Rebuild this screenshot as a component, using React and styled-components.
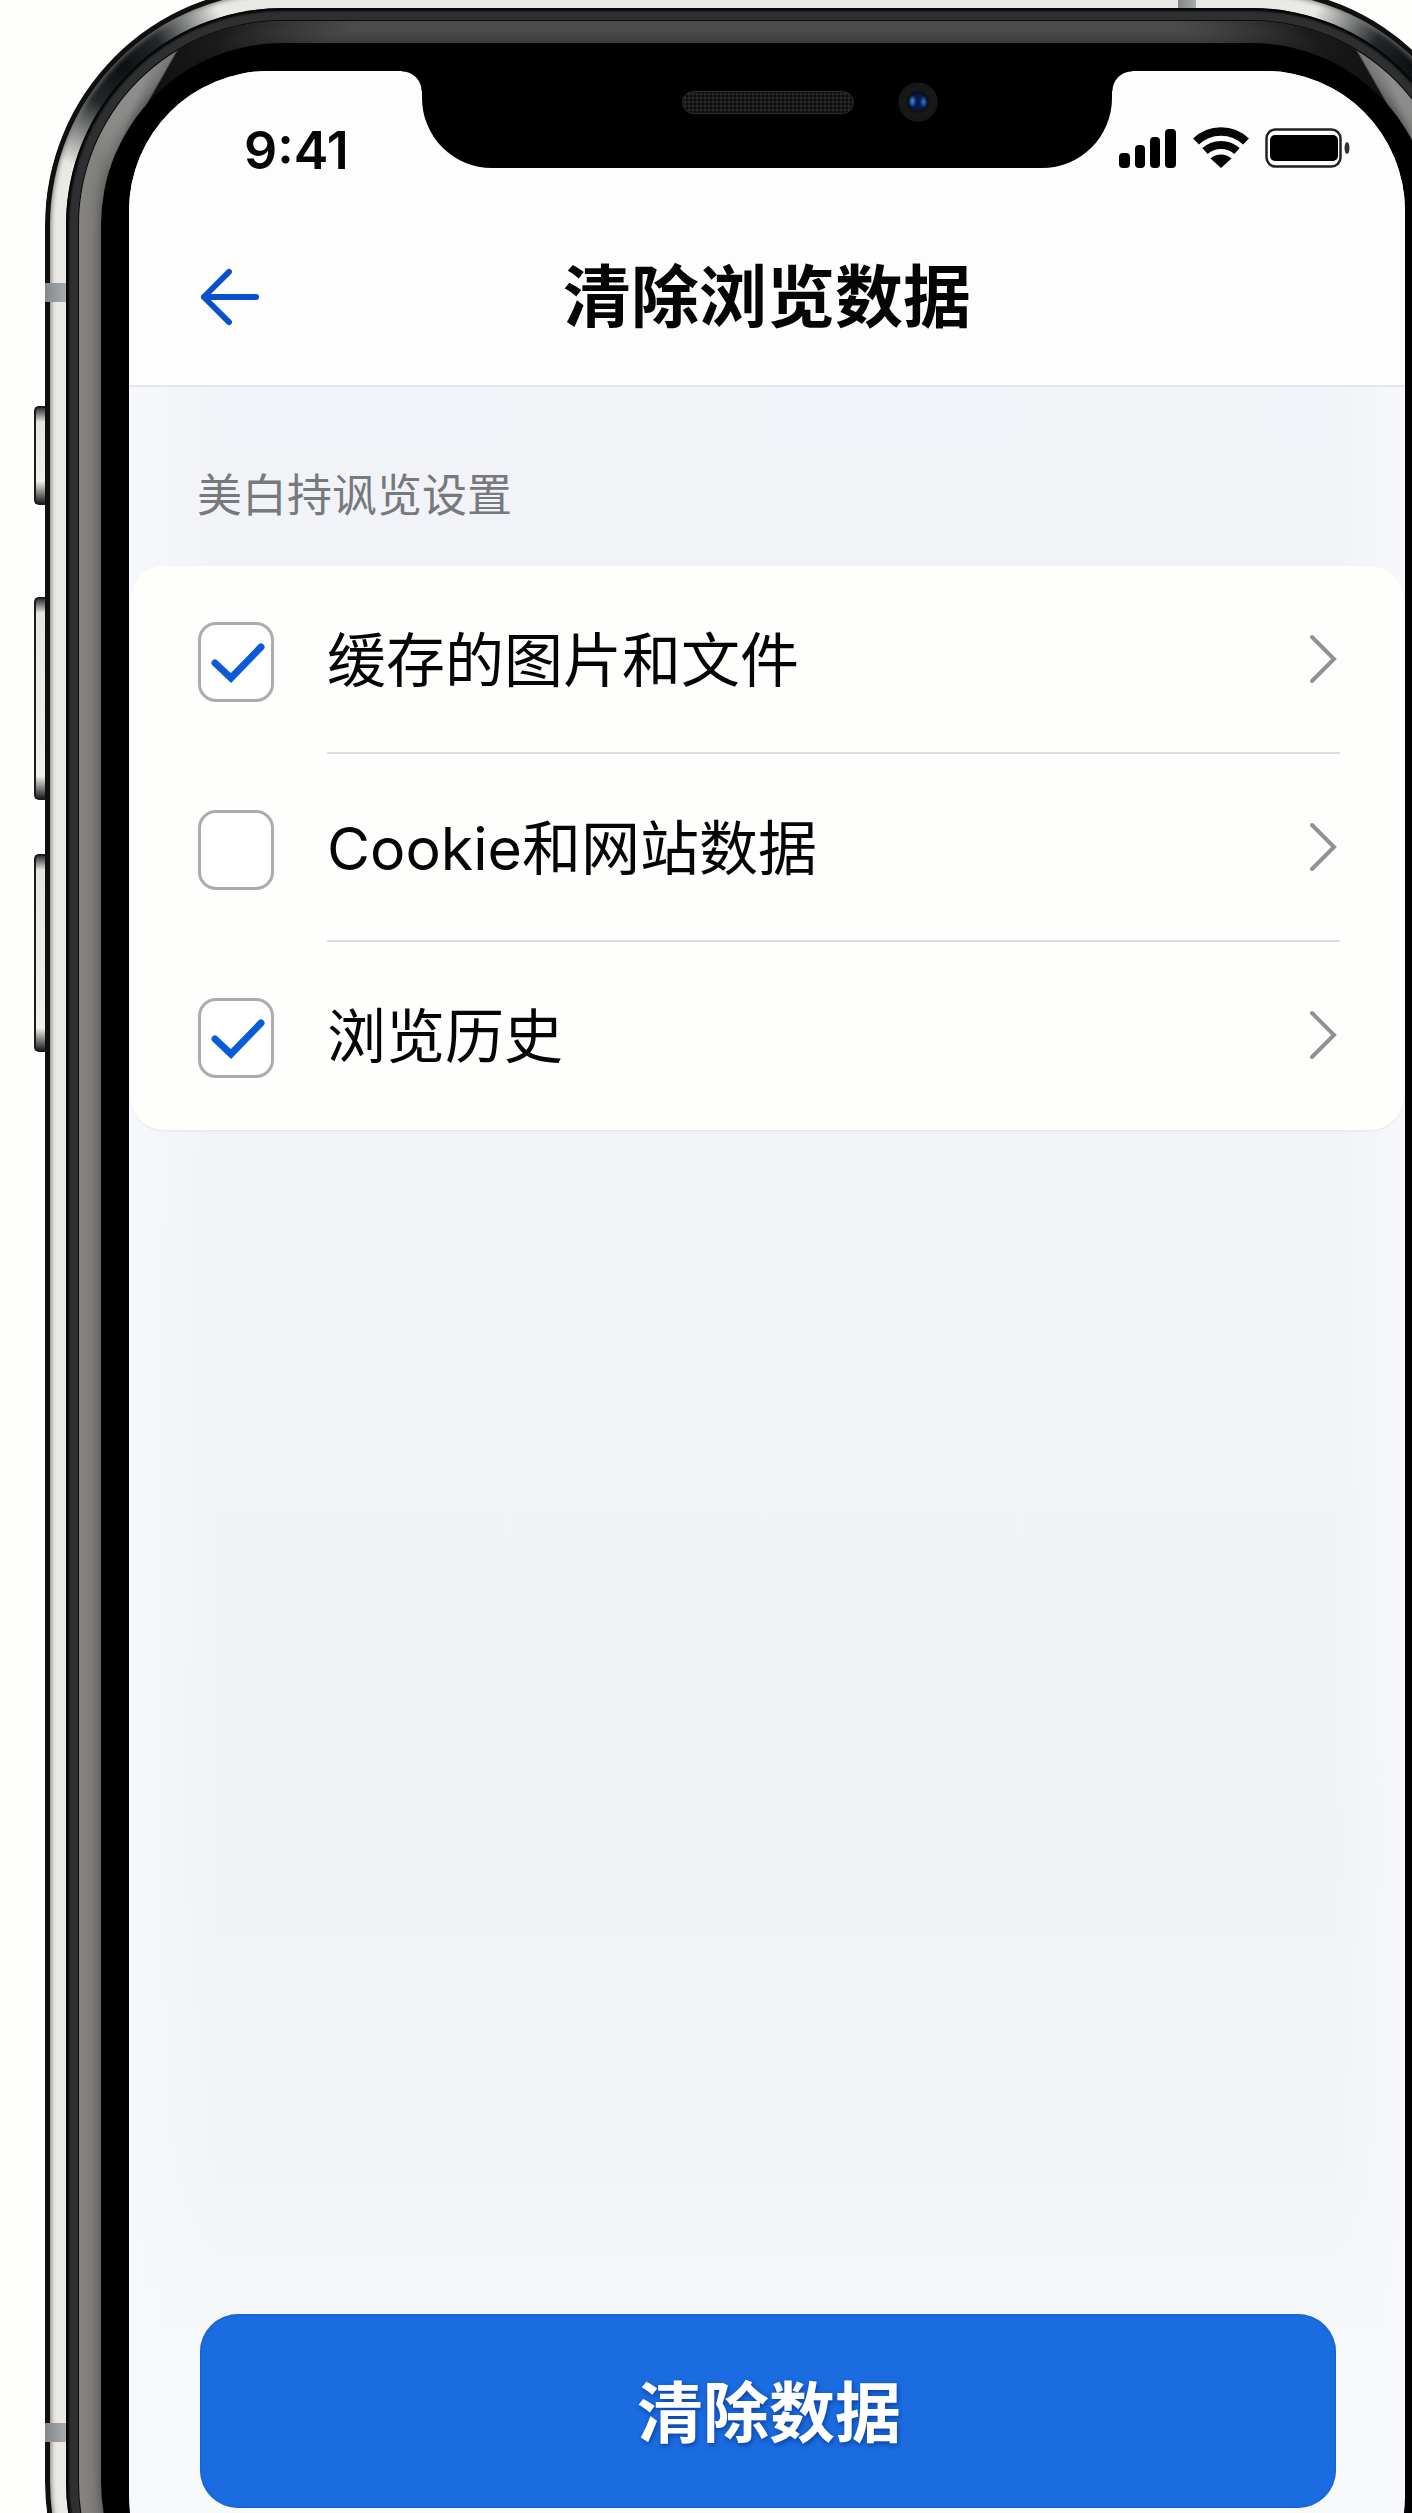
import React, { useState } from 'react';
import styled, { createGlobalStyle } from 'styled-components';

const GlobalStyle = createGlobalStyle`
    * {
        box-sizing: border-box;
    }

    body {
        margin: 0;
        background: #fefefd;
        font-family: Inter, 'Noto Sans CJK SC', sans-serif;
        color: #050505;
    }

    button {
        padding: 0;
        border: none;
        background: none;
        font: inherit;
        color: inherit;
        cursor: pointer;
    }
`;

const Page = styled.div`
    display: flex;
    min-height: 100vh;
    overflow: hidden;
`;

/* hardware keys on the left side of the phone */
const KeyRail = styled.div`
    display: flex;
    flex-direction: column;
    align-items: flex-end;
    flex: none;
    width: 46px;
    padding-top: 406px;
`;

const Key = styled.div`
    width: 12px;
    height: ${({ $height }) => $height}px;
    margin-bottom: ${({ $gap }) => $gap || 0}px;
    border: 2px solid #1c1c1c;
    border-right: none;
    border-radius: 5px 0 0 5px;
    background: linear-gradient(to bottom, #333 0, #e6e5e1 14px, #f1f0ec calc(100% - 22px), #222 100%);
`;

const Phone = styled.div`
    position: relative;
    display: flex;
    flex: 1;
    min-width: 0;
    min-height: calc(100vh + 220px);
    margin: -13px -77px -207px -1px;
    padding: 21px;
    border-radius: 238px;
    background:
        radial-gradient(circle at 76px 78px, #0c0f11 0, #23282b 44px, rgba(60, 64, 66, 0) 112px),
        radial-gradient(circle at calc(100% - 76px) 78px, #0c0f11 0, #23282b 44px, rgba(60, 64, 66, 0) 112px),
        #eae9e5;
    box-shadow: inset 0 0 0 5px #101010, inset 0 0 5px 6px #77756f;
`;

const AntennaBand = styled.span`
    position: absolute;
    background: linear-gradient(to right, #84878a, #a9acae);
`;

const SideBand = styled(AntennaBand)`
    left: 0;
    width: 21px;
    height: 19px;
    ${({ $bottom }) => ($bottom ? 'bottom: 278px;' : 'top: 296px;')}
`;

const TopBand = styled(AntennaBand)`
    top: 0;
    right: 293px;
    width: 18px;
    height: 21px;
`;

const Rim = styled.div`
    display: flex;
    flex: 1;
    min-width: 0;
    padding: 13px;
    border-radius: 217px;
    background: #2d2f30;
    box-shadow: inset 0 0 2px 3px #060606;
`;

/* each top corner has a reflection that ends in a sharp tip */
const Glass = styled.div`
    display: flex;
    flex: 1;
    min-width: 0;
    padding: 22px;
    border-radius: 204px;
    background:
        conic-gradient(from 30deg at 30px 150px, #141414 0, #1c1c1c 10deg, #4c4d4c 30deg 57deg, #84837f 80deg, #84837f 300deg, #8f8f8e 350deg, #777 359deg, #141414 360deg)
        left / 50% 100% no-repeat,
        conic-gradient(from -30deg at calc(100% - 30px) 150px, #141414 0, #777 1deg, #8f8f8e 10deg, #84837f 60deg, #84837f 280deg, #4c4d4c 303deg 330deg, #1c1c1c 350deg, #141414 360deg)
        right / 50% 100% no-repeat;
    box-shadow: 0 0 0 1px #0a0a0a;
`;

const Bezel = styled.div`
    display: flex;
    flex: 1;
    min-width: 0;
    padding: 28px;
    border-radius: 182px;
    background: #000;
    box-shadow: 0 0 16px rgba(0, 0, 0, 0.5);
`;

const Screen = styled.div`
    display: flex;
    flex-direction: column;
    flex: 1;
    min-width: 0;
    padding-bottom: 128px;
    border-radius: 140px;
    overflow: hidden;
    background:
        linear-gradient(to right, #f6f8fc 0, rgba(246, 248, 252, 0) 90px, rgba(246, 248, 252, 0) calc(100% - 70px), #f6f8fc 100%),
        linear-gradient(to bottom, #f1f3f8 0, #f1f3f7 40%, #f0f2f5 70%, #f3f4f6 82%, #f8f9fb 90%);
`;

const TopArea = styled.div`
    border-bottom: 2px solid #e4e5ea;
    background: #fdfdfe;
`;

const StatusBar = styled.div`
    display: grid;
    grid-template-columns: 1fr 690px 1fr;
    height: 97px;
`;

const Time = styled.span`
    align-self: end;
    padding-left: 115px;
    font-size: 52px;
    font-weight: 600;
    line-height: 34px;
`;

const Notch = styled.div`
    position: relative;
    display: flex;
    align-items: flex-start;
    padding: 11px 0 0 260px;
    gap: 44px;
    border-radius: 0 0 70px 70px;
    background: #000;

    &::before,
    &::after {
        content: '';
        position: absolute;
        top: 0;
        width: 20px;
        height: 20px;
    }

    &::before {
        right: 100%;
        background: radial-gradient(circle at 0 100%, transparent 19px, #000 20px);
    }

    &::after {
        left: 100%;
        background: radial-gradient(circle at 100% 100%, transparent 19px, #000 20px);
    }
`;

const Speaker = styled.span`
    width: 172px;
    height: 23px;
    margin-top: 9px;
    border: 1px solid #2c2c2c;
    border-radius: 12px;
    background: radial-gradient(circle, #2b2b2b 1px, #0c0c0c 2px) 0 0 / 4px 4px;
`;

const Camera = styled.span`
    width: 40px;
    height: 40px;
    border-radius: 50%;
    background:
        radial-gradient(ellipse 4px 6px at 36% 48%, #3b93e6 0, rgba(20, 70, 150, 0) 100%),
        radial-gradient(ellipse 4px 6px at 64% 50%, #2f78d0 0, rgba(20, 70, 150, 0) 100%),
        radial-gradient(circle, #041a55 0, #061a4a 7px, #0c0e12 10px, #17181a 12px, #151617 19px, #0a0a0a 20px);
`;

const StatusIcons = styled.div`
    display: flex;
    align-items: flex-end;
    justify-content: flex-end;
    gap: 16px;
    padding-right: 55px;

    svg {
        display: block;
        flex: none;
    }
`;

const TitleBar = styled.header`
    display: grid;
    grid-template-columns: 60px 1fr 60px;
    align-items: center;
    height: 217px;
    padding: 40px 70px 0;
`;

const BackButton = styled.button`
    display: flex;
`;

const Title = styled.h1`
    margin: 0;
    font-size: 68px;
    font-weight: 600;
    line-height: 80px;
    text-align: center;
`;

const SectionLabel = styled.h2`
    margin: 0;
    padding: 77px 70px 38px 68px;
    font-size: 45px;
    font-weight: 400;
    line-height: 64px;
    color: #77797d;
`;

const Card = styled.ul`
    margin: 0 1px;
    padding: 0 64px 0 68px;
    border-radius: 34px;
    background: #fefefd;
    box-shadow: 0 1px 2px rgba(40, 50, 80, 0.08);
    list-style: none;
`;

const Row = styled.li`
    display: flex;
    align-items: center;
    gap: 53px;
    height: 188px;
`;

const CheckWrap = styled.span`
    display: grid;
    flex: none;
    padding-top: 4px;

    > * {
        grid-area: 1 / 1;
    }

    svg {
        pointer-events: none;
    }
`;

const Checkbox = styled.input`
    appearance: none;
    width: 76px;
    height: 80px;
    margin: 0;
    border: 3px solid #acacac;
    border-radius: 18px;
    background: #fff;
    cursor: pointer;
`;

const RowBody = styled.div`
    display: flex;
    align-items: center;
    align-self: stretch;
    flex: 1;
    padding-right: 3px;
    border-bottom: 2px solid #dcdde1;

    ${Row}:last-child & {
        border-bottom-color: transparent;
    }
`;

const RowLabel = styled.label`
    flex: 1;
    padding-top: 4px;
    font-size: 59px;
    line-height: 80px;
    cursor: pointer;
`;

const ChevronButton = styled.button`
    display: flex;
`;

const Footer = styled.footer`
    margin-top: auto;
    padding: 0 69px 0 71px;
`;

const ClearButton = styled.button`
    width: 100%;
    height: 194px;
    padding: 0 0 6px 2px;
    border-radius: 38px;
    background: #1a6ce0;
    box-shadow: inset 0 0 3px #0c56c4;
    color: #fff;
    font-size: 66px;
    font-weight: 600;
    text-shadow: 1px 2px 5px rgba(0, 30, 120, 0.6);
`;

const SignalIcon = () => (
    <svg width="58" height="39" viewBox="0 0 58 39" aria-hidden="true">
        <rect x="0" y="24" width="11" height="15" rx="4" />
        <rect x="16" y="16" width="10" height="23" rx="4" />
        <rect x="31" y="8" width="10" height="31" rx="4" />
        <rect x="46" y="0" width="11" height="39" rx="4" />
    </svg>
);

const WifiIcon = () => (
    <svg width="56" height="41" viewBox="0 0 56 41" aria-hidden="true">
        <path d="M3 14.500A36 36 0 0 1 53 14.500" fill="none" stroke="#050505" strokeWidth="8.500" />
        <path d="M12 24A24 24 0 0 1 44 24" fill="none" stroke="#050505" strokeWidth="8" />
        <path d="M17.500 31.500A16 16 0 0 1 38.500 31.500L28 41Z" />
    </svg>
);

const BatteryIcon = () => (
    <svg width="85" height="40" viewBox="0 0 85 40" aria-hidden="true">
        <rect x="1.500" y="1.500" width="74" height="37" rx="9" fill="none" stroke="#222" strokeWidth="2.500" />
        <rect x="5" y="7" width="68" height="26" rx="5" />
        <ellipse cx="82" cy="20" rx="2.500" ry="6" fill="#333" />
    </svg>
);

const ArrowIcon = () => (
    <svg width="62" height="58" viewBox="0 0 62 58" fill="none" stroke="#0a50cb" strokeWidth="6" strokeLinecap="round" strokeLinejoin="round" aria-hidden="true">
        <path d="M31 3L5 29L31 55M5 29H59" />
    </svg>
);

const CheckIcon = () => (
    <svg width="76" height="80" viewBox="0 0 76 80" fill="none" stroke="#0a5bd8" strokeWidth="7" strokeLinecap="round" strokeLinejoin="miter" aria-hidden="true">
        <path d="M17 41L33 56L63 25" />
    </svg>
);

const ChevronIcon = () => (
    <svg width="28" height="50" viewBox="0 0 28 50" fill="none" stroke="#929294" strokeWidth="4" strokeLinecap="round" aria-hidden="true">
        <path d="M3 3L25 25L3 47" />
    </svg>
);

const OPTIONS = [
    { id: 'cache', label: '缓存的图片和文件', checked: true },
    { id: 'cookies', label: 'Cookie和网站数据', checked: false },
    { id: 'history', label: '浏览历史', checked: true },
];

const OptionRow = ({ id, label, checked, onToggle }) => (
    <Row>
        <CheckWrap>
            <Checkbox type="checkbox" id={id} checked={checked} onChange={() => onToggle(id)} />
            {checked && <CheckIcon />}
        </CheckWrap>
        <RowBody>
            <RowLabel htmlFor={id}>{label}</RowLabel>
            <ChevronButton type="button" aria-label={label}>
                <ChevronIcon />
            </ChevronButton>
        </RowBody>
    </Row>
);

const App = () => {
    const [options, setOptions] = useState(OPTIONS);

    const toggle = (id) => {
        setOptions(options.map(o => (o.id === id ? { ...o, checked: !o.checked } : o)));
    };

    const clearData = () => {
        setOptions(options.map(o => ({ ...o, checked: false })));
    };

    return (
        <Page>
            <GlobalStyle />
            <KeyRail>
                <Key $height={99} $gap={92} />
                <Key $height={203} $gap={54} />
                <Key $height={198} />
            </KeyRail>
            <Phone>
                <SideBand />
                <SideBand $bottom />
                <TopBand />
                <Rim>
                    <Glass>
                        <Bezel>
                            <Screen>
                                <TopArea>
                                    <StatusBar>
                                        <Time>9:41</Time>
                                        <Notch>
                                            <Speaker />
                                            <Camera />
                                        </Notch>
                                        <StatusIcons>
                                            <SignalIcon />
                                            <WifiIcon />
                                            <BatteryIcon />
                                        </StatusIcons>
                                    </StatusBar>
                                    <TitleBar>
                                        <BackButton type="button" aria-label="返回">
                                            <ArrowIcon />
                                        </BackButton>
                                        <Title>清除浏览数据</Title>
                                    </TitleBar>
                                </TopArea>
                                <SectionLabel>美白持讽览设置</SectionLabel>
                                <Card>
                                    {options.map(option => (
                                        <OptionRow key={option.id} {...option} onToggle={toggle} />
                                    ))}
                                </Card>
                                <Footer>
                                    <ClearButton type="button" onClick={clearData}>清除数据</ClearButton>
                                </Footer>
                            </Screen>
                        </Bezel>
                    </Glass>
                </Rim>
            </Phone>
        </Page>
    );
};

export default App;
